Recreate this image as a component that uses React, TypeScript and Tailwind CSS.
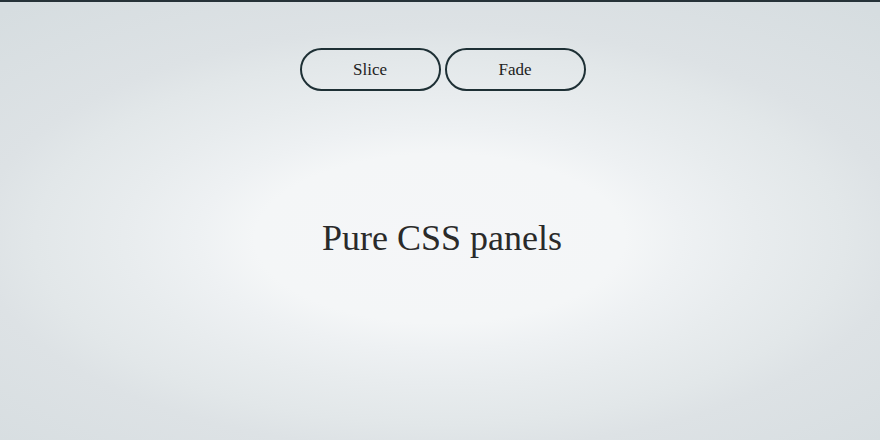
export default function App() {
  const tabs = ["Slice", "Fade"];

  return (
    <div className="flex h-[440px] w-full flex-col items-center border-t-2 border-[#263238] bg-[radial-gradient(ellipse_closest-side_at_50%_54%,#f5f6f8_0%,#f4f6f7_42%,#eef1f3_55%,#e8ecee_72%,#e2e7e9_92%,#dde2e5_105%,#d6dde0_150%)] font-['Liberation_Serif',serif] text-[#263238]">
      <div className="mt-[46px] ml-[5px] flex gap-[4px]">
        {tabs.map((tab) => (
          <button
            key={tab}
            type="button"
            className="h-[43px] w-[141px] rounded-full border-2 border-[#1e3035] bg-transparent text-[17px] text-[#222]"
          >
            {tab}
          </button>
        ))}
      </div>
      <h1 className="mt-[129px] ml-[4px] text-[36px] leading-none font-normal text-[#2a2a2a]">Pure CSS panels</h1>
    </div>
  );
}
